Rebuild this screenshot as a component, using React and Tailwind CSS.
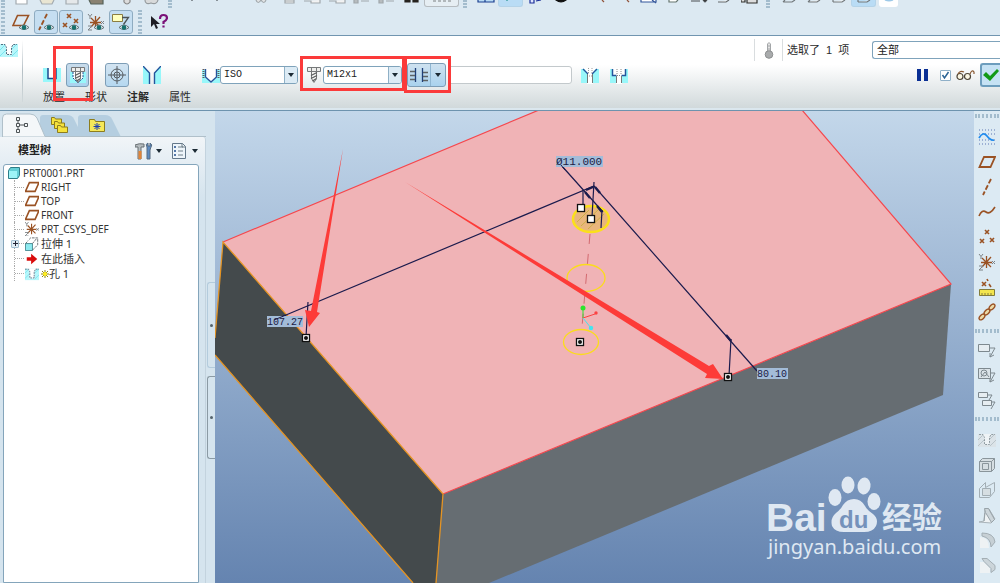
import { useState } from "react";

const BROWN = "#9a5224";

const Icon = ({ children, className = "" }) => (
  <svg
    viewBox="0 0 18 18"
    className={`h-[18px] w-[18px] shrink-0 ${className}`}
    fill="none"
    aria-hidden="true"
  >
    {children}
  </svg>
);

const Eye = () => (
  <g>
    <path d="M7 14.500q5-5 10 0q-5 4-10 0z" fill="#e6eef2" stroke="#5d6d72" />
    <circle cx="12" cy="14.500" r="2.300" fill="#14706c" />
  </g>
);

const PlaneShape = () => (
  <path d="M6 4h11l-4.500 10H1.500z" stroke={BROWN} strokeWidth="1.800" />
);

const Crosses = () => (
  <path
    d="M5 1l4 4M9 1L5 5M1 10l4 4M5 10l-4 4M12 6l4 4M16 6l-4 4"
    stroke={BROWN}
    strokeWidth="1.600"
  />
);

const CsysShape = () => (
  <g>
    <path d="M3 9.500h11M8.500 3v12M4 5l9 9M13 4l-9 10" stroke={BROWN} strokeWidth="1.300" />
    <path d="M1 1l2 2.500L5 1M3 3.500V6M1 13h4l-4 4h4M14 8l3 3M17 8l-3 3" stroke="#7d8286" />
  </g>
);

const HoleShape = ({ gray }) => (
  <g>
    <path d="M0 3h18v13H0z" fill={gray ? "#dbe3e8" : "#b6f7fb"} />
    <path
      d="M0 9l5-5M0 15l6-6M12 15l6-6M12 8l5-5"
      stroke={gray ? "#b9c4ca" : "#7be4ee"}
    />
    <path d="M4 3h10l-2 3v8H6V6z" fill={gray ? "#eef3f6" : "#fff"} />
    <path
      d="M1 3.500h4l1.500 3v7h5v-7l1.500-3h4"
      stroke={gray ? "#8f9ba1" : "#4f6d80"}
      strokeDasharray="2 1"
    />
  </g>
);

const ScrewShape = () => (
  <g stroke="#77797a">
    <path d="M6.500 5.500h5v7l-2.500 4-2.500-4z" fill="#f6f6f4" />
    <path d="M6 9.500l6-3M6 12.500l6-3M7.500 15l4-2.500" stroke="#5a5c5d" strokeWidth="1.300" />
    <path d="M2.500 1.500h13v4h-13zM6.500 1.500v4M11.500 1.500v4" fill="#eeeeec" />
  </g>
);

const Folder = ({ x = 0, y = 0 }) => (
  <path
    d={`M${x + 0.5} ${y + 8.5}v-7h3l1 1.500h6v5.500z`}
    fill="#f5e23c"
    stroke="#8d7d1d"
  />
);

/* bottom slices of the scrolled-off toolbar */
const slices = [
  { name: "new", gap: "ml-[4px]", path: "M3 0v4h11V0", fill: "#fff", stroke: "#a3abb0" },
  { name: "open", gap: "", path: "M2 0l2 4h10l2-4", fill: "#e9e5d2", stroke: "#a3abb0" },
  { name: "save", gap: "", path: "M3 0v4h12V0", fill: "#e5e8ea", stroke: "#a3abb0" },
  { name: "print", gap: "", path: "M1 0l2 4h12V0", fill: "#8a8272", stroke: "#56635a" },
  { name: "mail", gap: "ml-[5px]", path: "M6 0v2q3 4 6 0V0", fill: "#dcdcdc", stroke: "#888" },
  { name: "link", gap: "", path: "M2 0q0 5 6 3q6 2 7-3", fill: "#d8dadb", stroke: "#959b9e" },
  { name: "undo", gap: "ml-[6px]", path: "M10 0v1", fill: "none", stroke: "#4f565b", grip: true },
  { name: "redo", gap: "ml-[4px]", path: "M6 0v1", fill: "none", stroke: "#4f565b" },
  { name: "regenerate", gap: "ml-[16px]", path: "M4 0q2 5 5 0q3 5 5 0", fill: "#e2e4e5", stroke: "#a0a7ab" },
  { name: "cut", gap: "ml-[4px]", path: "M4 0v3h9V0M4 1h9", fill: "#f2f2f2", stroke: "#a0a7ab" },
  { name: "copy", gap: "-ml-[3px]", path: "M1 1h7v2h9V0", fill: "#f2f2f2", stroke: "#a0a7ab" },
  { name: "paste", gap: "", path: "M1 1h7v2h9V0", fill: "#f2f2f2", stroke: "#a0a7ab" },
  { name: "tree up", gap: "", path: "M1 0v3h4V0M8 1h8", fill: "#b7bcbf", stroke: "#a0a7ab" },
  { name: "tree down", gap: "", path: "M1 0v3h4V0M8 1h8", fill: "#b7bcbf", stroke: "#a0a7ab" },
  { name: "find", gap: "", path: "M2 0v2h5V0M10 0v2h5V0", fill: "#26231f", stroke: "#26231f" },
  { name: "select box", gap: "", path: "M0 1h3M5 1h3M10 1h3M15 1h3", fill: "none", stroke: "#7d8082", box: true },
  { name: "window", gap: "ml-[6px]", path: "M1 0v2h16V0M8 0v2", fill: "#b9dcf5", stroke: "#1b3f8f", grip: true },
  { name: "layers", gap: "", path: "M4 0h2", fill: "none", stroke: "#0d857f", active: true },
  { name: "spin", gap: "", path: "M3 0v3h4V0M9 1l5-1", fill: "#dfe6ff", stroke: "#1c2f9a" },
  { name: "render", gap: "", path: "M4 0q5 4 10 0z", fill: "#111", stroke: "#111" },
  { name: "zoom in", gap: "ml-[17px]", path: "M8 0l2 2", fill: "none", stroke: "#92533a" },
  { name: "zoom out", gap: "", path: "M8 0l2 2", fill: "none", stroke: "#92533a" },
  { name: "refit", gap: "-ml-[4px]", path: "M1 0v2h15V0M12 0l4 3", fill: "#fff", stroke: "#33569b" },
  { name: "orient", gap: "", path: "M4 0v2h7l2-2", fill: "#fff", stroke: "#66766f" },
  { name: "views", gap: "", path: "M1 1h9M13 0l2 2 2-2", fill: "#333", stroke: "#4b4f51" },
  { name: "saved", gap: "ml-px", path: "M2 2h8l3-2", fill: "#fff", stroke: "#62686b" },
  { name: "camera", gap: "", path: "M0 0v2h4V0M6 0v3h10V0", fill: "#ddd", stroke: "#30302c" },
  { name: "wireframe", gap: "ml-[6px]", path: "M3 2h9l3-2M3 2l2-2", fill: "none", stroke: "#72787b", grip: true },
  { name: "hidden line", gap: "", path: "M3 2h9l3-2M3 2l2-2", fill: "#eee", stroke: "#72787b" },
  { name: "no hidden", gap: "", path: "M3 2h9l3-2M3 2V0", fill: "#fff", stroke: "#72787b" },
  { name: "shading", gap: "", path: "M3 2h9l3-2M3 2V0", fill: "#dceefa", stroke: "#72787b", active: true },
  { name: "realism", gap: "", path: "M5 0q4 2 8 0z", fill: "#8fc2e6", stroke: "#9dc9e8", white: true },
];

const sliceFrame = (s) => {
  if (s.active) return "w-[25px] border-[#b4d3e8] bg-[#b9dcf5]";
  if (s.white) return "w-[19px] ml-[3px] h-[5px] border-white bg-white";
  if (s.box) return "w-[35px] border-[#b6bcc0] bg-[#e6eef3]";
  return "w-[25px] border-transparent";
};

const Grip = ({ className }) => (
  <span
    className={`w-1 shrink-0 border-x-2 border-dotted border-[#a3bccd] ${className}`}
  />
);

const Toolbar = () => (
  <header className="bg-[#dce9f2]">
    <div className="flex h-2 overflow-hidden">
      <Grip className="ml-px h-2" />
      {slices.map((s) => (
        <div key={s.name} className="flex shrink-0">
          {s.grip && <Grip className="ml-[4px] h-2" />}
          <button
            type="button"
            aria-label={s.name}
            className={`h-[7px] rounded-b-[3px] border border-t-0 ${s.gap} ${sliceFrame(s)}`}
          >
            <svg viewBox="0 0 18 6" className="mx-auto h-[6px] w-[18px]">
              <path d={s.path} fill={s.fill} stroke={s.stroke} strokeWidth="1.200" />
            </svg>
          </button>
        </div>
      ))}
    </div>
    <div className="flex h-[27px] items-center gap-px">
      <Grip className="mr-[3px] ml-px h-6" />
      <ToolButton label="Datum plane display">
        <path d="M5.500 2.500h11l-5 10H1z" stroke={BROWN} strokeWidth="1.600" />
        <Eye />
      </ToolButton>
      <ToolButton label="Datum axis display" active>
        <path d="M10 1L2 17" stroke={BROWN} strokeWidth="1.800" strokeDasharray="5 2" />
        <Eye />
      </ToolButton>
      <ToolButton label="Datum point display" active>
        <Crosses />
        <Eye />
      </ToolButton>
      <ToolButton label="Coordinate system display">
        <CsysShape />
        <Eye />
      </ToolButton>
      <ToolButton label="Annotation display" active>
        <path d="M0.500 1.500h10v7h-10z" fill="#ffffbe" stroke="#8b7d42" />
        <path d="M10 4.500h6.500l-5 7" stroke="#4c5356" strokeWidth="1.300" />
        <Eye />
      </ToolButton>
      <Grip className="mx-1 h-6" />
      <ToolButton label="Context help">
        <path d="M1 3v11l3-3 2 5 2-1-2-4h4z" fill="#1d1d24" />
        <path
          d="M10 6q0-4 3.500-4t3.500 3q0 2-3.500 4v2M13.500 12.500v2"
          stroke="#7a1178"
          strokeWidth="2.200"
        />
      </ToolButton>
    </div>
  </header>
);

const ToolButton = ({ label, active, children }) => (
  <button
    type="button"
    aria-label={label}
    className={`flex h-6 w-6 shrink-0 items-center justify-center rounded-[3px] border ${
      active ? "border-[#8facc1] bg-[#c5def1]" : "border-transparent"
    }`}
  >
    <Icon>{children}</Icon>
  </button>
);

const Combo = ({ label, options, className }) => (
  <div className={`relative shrink-0 ${className}`}>
    <select
      aria-label={label}
      className="block h-[18px] w-full appearance-none rounded-[3px] border border-[#7fa3bb] bg-white pl-[3px] font-['Liberation_Mono','Noto_Sans_CJK_SC',monospace] text-[10px] leading-4 text-[#222]"
    >
      {options.map((o) => (
        <option key={o}>{o}</option>
      ))}
    </select>
    <span className="pointer-events-none absolute top-px right-px bottom-px flex w-[13px] items-center justify-center rounded-r-[2px] border-l border-[#8fb0c6] bg-[#dcebf5]">
      <Caret />
    </span>
  </div>
);

const Caret = () => (
  <svg viewBox="0 0 6 4" className="h-1 w-[6px]" aria-hidden="true">
    <path d="M0 0h6L3 4z" fill="#1c2a34" />
  </svg>
);

const Highlight = ({ className }) => (
  <span
    className={`pointer-events-none absolute border-[3px] border-[#fb3a3a] ${className}`}
  />
);

const Dashboard = () => {
  const [preview, setPreview] = useState(true);

  return (
    <section className="border-t border-[#7195b0] bg-[#dbe7ee]">
      <div className="flex items-start bg-linear-to-b from-white from-40% to-[#d1d9db]">
        <div className="flex w-[22px] shrink-0 pt-[5px]">
          <Icon>
            <HoleShape />
          </Icon>
        </div>
        <div className="mt-1 h-[62px] w-px shrink-0 bg-linear-to-b from-white via-[#b5bfc5] to-[#d1d9db]" />
        <div className="flex flex-col pt-[27px]">
          <div className="flex h-6 items-center pl-5">
            <Icon>
              <path d="M0 2h18v14H0z" fill="#98f7fa" />
              <path d="M5 0h8v12H5z" fill="#fff" />
              <path d="M5 2v10.500h8V2" stroke="#1e4a8e" strokeWidth="1.500" />
            </Icon>
            <div className="relative ml-[5px]">
              <button
                type="button"
                aria-label="Standard hole"
                className="flex h-6 w-[23px] items-center justify-center rounded-[3px] border border-[#7d9db6] bg-linear-to-b from-[#c9dceb] to-[#a9d2ee]"
              >
                <Icon>
                  <path d="M1 6h16v11H1z" fill="#98f7fa" />
                  <path d="M4 6v6l5 5 5-5V6" fill="#fff" stroke="#1e4a8e" strokeDasharray="2 1" />
                  <ScrewShape />
                </Icon>
              </button>
              <Highlight className="-top-[17px] -left-[13px] h-[55px] w-[40px]" />
            </div>
            <button
              type="button"
              aria-label="Tap hole"
              className="ml-4 flex h-6 w-6 items-center justify-center rounded-[3px] border border-[#7d9db6] bg-linear-to-b from-[#d3e4f1] to-[#b5d8f0]"
            >
              <Icon>
                <circle cx="9" cy="9" r="6" stroke="#555b60" />
                <circle cx="9" cy="9" r="3" stroke="#555b60" />
                <path d="M9 0v18M0 9h18" stroke="#555b60" />
              </Icon>
            </button>
            <button type="button" aria-label="Countersink" className="ml-[14px]">
              <Icon>
                <path d="M0 0l7 7v11H0zM18 0l-7 7v11h7z" fill="#98f7fa" />
                <path d="M0 0l6.500 7v11M18 0l-6.500 7v11" stroke="#23549c" strokeWidth="1.400" />
              </Icon>
            </button>
            <Icon className="ml-[41px]">
              <path d="M0 4h18v13H0z" fill="#98f7fa" />
              <path d="M3 3h12v8l-6 6-6-6z" fill="#fff" />
              <path d="M3.500 3v8l5.500 5 5.500-5V3" stroke="#23549c" strokeWidth="1.400" />
              <path d="M1.500 3v9M16.500 3v9" stroke="#5c5f60" strokeWidth="2" strokeDasharray="1 1" />
            </Icon>
            <Combo label="Thread series" options={["ISO", "UNC", "UNF"]} className="w-[78px]" />
            <div className="relative ml-[7px] flex items-center">
              <Icon>
                <ScrewShape />
              </Icon>
              <Combo label="Screw size" options={["M12x1", "M12x1.25", "M12x1.5"]} className="w-[79px]" />
              <Highlight className="-top-[10px] -left-[5px] h-[35px] w-[105px]" />
            </div>
            <div className="relative ml-[5px]">
              <button
                type="button"
                aria-label="Depth option"
                className="flex h-6 w-[39px] items-center rounded-[3px] border border-[#7d9db6] bg-linear-to-b from-[#cfe2f0] to-[#a9d2ee]"
              >
                <span className="flex h-full w-[23px] items-center justify-center border-r border-[#8fb6d2]">
                  <Icon>
                    <path d="M5.500 2v14M12.500 2v14" stroke="#1f3f78" strokeWidth="1.300" />
                    <path
                      d="M0 5.500h5M0 9.500h5M0 13.500h5M13 6.500h5M13 10.500h5M13 14.500h5"
                      stroke="#5d6264"
                      strokeWidth="1.300"
                    />
                  </Icon>
                </span>
                <span className="flex flex-1 justify-center">
                  <Caret />
                </span>
              </button>
              <Highlight className="-top-[7px] -left-[3px] h-[37px] w-[47px]" />
            </div>
            <input
              type="text"
              aria-label="Depth value"
              className="ml-[2px] h-[18px] w-[124px] rounded-[3px] border border-[#c3c9cc] bg-white px-1 text-[10px]"
            />
            <button type="button" aria-label="Exit countersink" className="ml-[9px]">
              <Icon>
                <path d="M0 3h18v14H0z" fill="#98f7fa" />
                <path d="M3 2h12l-3 5v11H6V7z" fill="#fff" />
                <path d="M2 3l5 5M16 3l-5 5" stroke="#23549c" strokeWidth="1.400" />
                <path d="M6.500 8v9M11.500 8v9" stroke="#777" />
                <path d="M7.500 2v5M11 2v5M8 10h3" stroke="#999" strokeDasharray="1 1" />
              </Icon>
            </button>
            <button type="button" aria-label="Counterbore" className="ml-[11px]">
              <Icon>
                <path d="M0 3h18v14H0z" fill="#98f7fa" />
                <path d="M3 2h12v7h-3v9H6V9H3z" fill="#fff" />
                <path d="M2.500 3v6.500h4M15.500 3v6.500h-4" stroke="#23549c" strokeWidth="1.500" />
                <path d="M6.500 10v7M11.500 10v7" stroke="#777" />
                <path d="M7 3v6M11 3v6M7 9.500h4" stroke="#888" strokeDasharray="1 1" />
              </Icon>
            </button>
          </div>
          <nav className="flex h-[21px] items-center gap-5 pl-5 text-[11px] text-[#2b2b2b]">
            <button type="button">放置</button>
            <button type="button">形状</button>
            <button type="button" className="font-bold">
              注解
            </button>
            <button type="button">属性</button>
          </nav>
        </div>
        <div className="ml-auto flex w-[246px] shrink-0 flex-col pt-[3px]">
          <div className="flex h-[22px] items-center">
            <span className="flex h-full w-[29px] items-center justify-center border-x border-[#d9dddf]">
              <svg viewBox="0 0 10 18" className="h-[18px] w-[10px]" aria-hidden="true">
                <path d="M3.500 11V3q1.500-3 3 0v8" fill="#e3e3e3" stroke="#a3a6a8" />
                <path d="M3.500 5h3M3.500 8h3" stroke="#a3a6a8" />
                <circle cx="5" cy="13.500" r="3.800" fill="#a9abac" stroke="#8d8f90" />
              </svg>
            </span>
            <label
              htmlFor="filter"
              className="w-[89px] pl-1 text-[11px] whitespace-pre text-[#2b2b2b]"
            >
              选取了  1  项
            </label>
            <select
              id="filter"
              className="h-[18px] flex-1 appearance-none rounded-l-[3px] border border-r-0 border-[#7fa3bb] bg-white pl-1 text-[11px] leading-4 text-[#222]"
            >
              <option>全部</option>
              <option>几何</option>
            </select>
          </div>
          <div className="mt-[2px] flex h-6 items-center justify-end">
            <button type="button" aria-label="Pause" className="flex gap-[3px]">
              <span className="h-3 w-1 bg-[#0a2f94]" />
              <span className="h-3 w-1 bg-[#0a2f94]" />
            </button>
            <span className="relative ml-3 flex">
              <input
                type="checkbox"
                aria-label="Preview"
                checked={preview}
                onChange={(e) => setPreview(e.target.checked)}
                className="h-[11px] w-[11px] appearance-none rounded-[1px] border border-[#8fb0c8] bg-white"
              />
              {preview && (
                <svg viewBox="0 0 11 11" className="pointer-events-none absolute inset-0 h-[11px] w-[11px]">
                  <path d="M2.500 5l2 3 4-6" fill="none" stroke="#2a6394" strokeWidth="1.500" />
                </svg>
              )}
            </span>
            <svg viewBox="0 0 20 12" className="ml-[5px] h-3 w-5" fill="none" aria-hidden="true">
              <circle cx="4" cy="7.500" r="3" fill="#fbf7e4" stroke="#4c4436" strokeWidth="1.200" />
              <circle cx="11.500" cy="7.500" r="3" fill="#fbf7e4" stroke="#4c4436" strokeWidth="1.200" />
              <path d="M2 5q2-4 6-2M14 5q2-5 4-2v2" stroke="#8a5a34" strokeWidth="1.200" />
            </svg>
            <button
              type="button"
              aria-label="Accept"
              className="ml-1 flex h-6 w-5 items-center justify-center rounded-l-[3px] border-2 border-r-0 border-[#6d9dbd] bg-[#c6e2f4]"
            >
              <svg viewBox="0 0 16 14" className="h-[14px] w-4">
                <path d="M0 7l3-3 4 4 7-7 2 2L7 13z" fill="#129a16" />
              </svg>
            </button>
          </div>
        </div>
      </div>
      <div className="h-[3px] border-b border-[#6d93ae]" />
    </section>
  );
};

const TREE = [
  { name: "RIGHT", icon: "plane" },
  { name: "TOP", icon: "plane" },
  { name: "FRONT", icon: "plane" },
  { name: "PRT_CSYS_DEF", icon: "csys" },
  { name: "拉伸 1", icon: "extrude", cjk: true, plus: true },
  { name: "在此插入", icon: "insert", cjk: true },
  { name: "孔 1", icon: "hole", cjk: true, star: true },
];

const TreeIcon = ({ type }) => (
  <svg viewBox="1 1 16 16" className="h-[14px] w-[14px] shrink-0" fill="none" aria-hidden="true">
    {type === "plane" && <PlaneShape />}
    {type === "csys" && <CsysShape />}
    {type === "extrude" && (
      <g>
        <path d="M1.500 8.500h8v8h-8z" fill="#8eeaf0" stroke="#3d8189" />
        <path d="M1.500 8.500l3-3M9.500 8.500l5-6M9.500 16l6-6V2h-8l-3 3" stroke="#5b6467" strokeDasharray="3 1" />
      </g>
    )}
    {type === "insert" && <path d="M3 7h5V3l7 6-7 6v-4H3z" fill="#d90c0c" />}
    {type === "hole" && <HoleShape />}
  </svg>
);

const ModelTree = () => (
  <ul className="mr-[6px] ml-[3px] flex-1 rounded-t-[3px] border border-[#84a5bb] bg-white pt-[1px] font-['Noto_Sans','Noto_Sans_CJK_SC',sans-serif] text-[10px] leading-[14px] text-[#333]">
    <li className="flex h-[14px] items-center gap-[3px] pl-1">
      <svg viewBox="0 0 12 12" className="h-3 w-3 shrink-0">
        <path d="M.5 3.500l2-3h9v8l-2 3h-9z" fill="#64cfd6" stroke="#2e7d88" />
        <path d="M1 4h8v7H1z" fill="#9df4f7" />
      </svg>
      PRT0001.PRT
    </li>
    {TREE.map((n) => (
      <li
        key={n.name}
        className={`flex items-center ${n.cjk ? "h-[15px] text-[11px]" : "h-[14px]"}`}
      >
        <span className="relative ml-[10px] flex h-full w-[10px] items-center border-l border-dotted border-[#aaa]">
          <span className="w-full border-t border-dotted border-[#aaa]" />
          {n.plus && (
            <button
              type="button"
              aria-label="Expand"
              className="absolute -left-1 flex h-2 w-2 items-center justify-center rounded-[1px] border border-[#a4bfd2] bg-[#e1edf5]"
            >
              <svg viewBox="0 0 5 5" className="h-[5px] w-[5px]">
                <path d="M0 2.500h5M2.500 0v5" stroke="#223" />
              </svg>
            </button>
          )}
        </span>
        <span className="flex items-center pl-px">
          <TreeIcon type={n.icon} />
        </span>
        <span className="flex items-center pl-[2px]">
          {n.star && (
            <svg viewBox="0 0 8 8" className="h-2 w-2">
              <path d="M4 0v8M0 4h8M1 1l6 6M7 1L1 7" stroke="#8e8410" />
              <circle cx="4" cy="4" r="2" fill="#ffee1a" />
            </svg>
          )}
          {n.name}
        </span>
      </li>
    ))}
  </ul>
);

const Sidebar = () => (
  <aside className="flex w-[215px] shrink-0 bg-[#d5e4ee]">
    <div className="flex min-w-0 flex-1 flex-col">
      <div className="relative flex h-[26px] items-end">
        <svg viewBox="0 0 206 26" className="absolute inset-0 h-[26px] w-[206px]" fill="none">
          <path d="M78 25V7q0-3 3-3h24q5 0 7 4l9 18z" fill="#b5cee0" />
          <path d="M40 25V7q0-3 3-3h24q5 0 7 4l9 18z" fill="#b5cee0" />
          <path d="M2.500 26V7q0-4 4-4H30q5 0 7 4l8 18.500h161V26z" fill="#f4f7f9" stroke="#b0c0ca" />
        </svg>
        <button type="button" aria-label="Model tree" className="relative ml-[13px] flex h-6 w-[38px] items-center">
          <Icon>
            <path
              d="M3.500 1.500h3v3h-3zM3.500 7.500h3v3h-3zM3.500 13.500h3v3h-3zM11.500 7.500h3v3h-3z"
              stroke="#4d5356"
            />
            <path d="M5 5v2M5 11v2M7 9h4" stroke="#4d5356" />
          </Icon>
        </button>
        <button type="button" aria-label="Folders" className="relative flex h-6 w-[37px] items-center">
          <Icon>
            <Folder x={0} y={0} />
            <Folder x={3} y={4} />
            <Folder x={6} y={8} />
          </Icon>
        </button>
        <button type="button" aria-label="Favorites" className="relative flex h-6 items-center">
          <Icon>
            <path d="M1.500 15.500v-12h5l1 2h9v10z" fill="#f5e85a" stroke="#8d7d1d" />
            <path d="M9 7v7M5.500 10.500h7M6.500 8l5 5M11.500 8l-5 5" stroke="#1c3fb4" />
          </Icon>
        </button>
      </div>
      <div className="flex min-h-0 flex-1 flex-col rounded-tr-[3px] border-r border-[#c3d3de] bg-linear-to-b from-[#f1f5f8] to-[#d5e4ee] to-[60px]">
        <div className="flex h-[27px] shrink-0 items-center pr-[7px] pl-[18px]">
          <h2 className="flex-1 text-[11px] font-bold text-[#222]">模型树</h2>
          <button type="button" aria-label="Settings" className="flex items-center gap-[3px]">
            <Icon>
              <path d="M0 5V3q4-2 9-1v3H6v12H3V5z" fill="#b5bcbf" stroke="#666e72" />
              <path d="M3.500 9h3v8h-3z" fill="#e0853a" />
              <path d="M12 8V5q-2-3 1-4v3h2V1q3 2 1 4l-1 3v9h-3z" fill="#5d8cc4" stroke="#566b80" />
            </Icon>
            <Caret />
          </button>
          <button type="button" aria-label="Show" className="ml-[9px] flex items-center gap-[3px]">
            <Icon>
              <path d="M1.500 1.500h10l3 3v12h-13z" fill="#eef5fa" stroke="#64788a" />
              <path d="M3 5h2M3 9h2M3 13h2" stroke="#234f8f" strokeWidth="1.600" />
              <path d="M7 5h5M7 9h5M7 13h5M11 1v4h4" stroke="#6e7e88" />
            </Icon>
            <Caret />
          </button>
        </div>
        <ModelTree />
      </div>
    </div>
    <div className="flex w-[9px] shrink-0 flex-col pt-[171px]">
      <button
        type="button"
        aria-label="Collapse panel"
        className="ml-px flex h-[86px] items-center justify-center rounded-l-[3px] border border-r-0 border-[#b3cbdc]"
      >
        <span className="h-[3px] w-[3px] rounded-full bg-[#56646d]" />
      </button>
      <button
        type="button"
        aria-label="Expand browser"
        className="mt-2 ml-px flex h-[83px] items-center justify-center rounded-l-[3px] border border-r-0 border-[#8b9aa4]"
      >
        <span className="h-[3px] w-[3px] rounded-full bg-[#56646d]" />
      </button>
    </div>
  </aside>
);

const Handle = ({ x, y, dot }) => (
  <g>
    <rect x={x - 3.5} y={y - 3.5} width="7" height="7" fill="#fff" stroke="#111" strokeWidth="1.300" />
    {dot && <circle cx={x} cy={y} r="2" fill="#111" />}
  </g>
);

const Dimension = ({ x, y, width, size, children }) => (
  <g>
    <rect x={x} y={y} width={width} height="11" fill="#a3bcd8" />
    <text x={x} y={y + 9} className={`fill-[#1b1b45] font-['Liberation_Mono',monospace] ${size}`}>
      {children}
    </text>
  </g>
);

const Viewport = () => (
  <main className="relative min-w-0 flex-1 overflow-hidden bg-linear-to-b from-[#c3d7ea] to-[#6584b0]">
    <svg
      viewBox="215 111 759 472"
      preserveAspectRatio="xMinYMin slice"
      className="absolute inset-0 h-full w-full"
      fill="none"
    >
      <path d="M223 242L443 494L436 583H413L215 355V338z" fill="#444a4c" />
      <path d="M443 494L951 284L943 395L489 583H436z" fill="#666d72" />
      <path d="M539 110H802L951 284L443 494L223 242z" fill="#f0b3b6" />
      <path d="M539 110L223 242M802 110L951 284L443 494" stroke="#f5474d" strokeWidth="1.200" />
      <path
        d="M215 338L223 242L443 494L436 583M215 355L413 583"
        stroke="#e59423"
        strokeWidth="1.300"
      />

      <ellipse cx="591" cy="219" rx="18" ry="13" fill="#e9b67c" stroke="#fbe01a" strokeWidth="2.500" />
      <path d="M577 222l12-12M581 226l18-17M588 229l16-15" stroke="#cdb047" />
      <ellipse cx="586" cy="278" rx="19" ry="13.500" stroke="#fbdc1c" strokeWidth="1.300" />
      <ellipse cx="581" cy="342" rx="17.500" ry="12.500" stroke="#fbdc1c" strokeWidth="1.300" />
      <path d="M590 234L582 327" stroke="#d36a70" strokeDasharray="10 10" />

      <g stroke="#1b1b4d" strokeWidth="1.200">
        <path d="M274 320L594 186L757 371M561 165L603 212" />
        <path d="M594 182L592 217M583 190V208M602 210L601 228M308 302L306 337M731 339L729 376" />
        <path d="M586 190l7-3M595 187l5 6M585 192l5 6M597 206l5 6M726 335l5 6" strokeWidth="2.400" />
      </g>

      <Dimension x={556} y={156} width={47} size="text-[11px]">
        Ø11.000
      </Dimension>
      <Dimension x={267} y={316} width={36} size="text-[10px]">
        107.27
      </Dimension>
      <Dimension x={757} y={368} width={31} size="text-[10px]">
        80.10
      </Dimension>
      <path d="M561 165l4 5M274 320l12-5" stroke="#1b1b4d" />

      <path d="M583 318L583 308" stroke="#2fe02f" />
      <path d="M583 318L595 314" stroke="#fb4242" />
      <path d="M583 318L591 328" stroke="#45e4ee" />
      <circle cx="583" cy="308" r="2.500" fill="#2be52b" />
      <circle cx="596" cy="313" r="1.700" fill="#fb4242" />
      <circle cx="591" cy="328" r="2.200" fill="#45e4ee" />

      <path d="M343 149L317 312L320 313L309 327L305 310L311 311z" fill="#fd3b38" />
      <path d="M405 182L709 366L713 364L723 379L705 378L707 374z" fill="#fd3b38" />

      <Handle x={581} y={208} />
      <Handle x={591} y={219} />
      <Handle x={580} y={342} dot />
      <Handle x={306} y={338} dot />
      <Handle x={728} y={377} dot />

      <g fill="#dfe8f2">
        <text x="766" y="531" className="font-['Liberation_Sans',sans-serif] text-[39px] font-bold">
          Bai
        </text>
        <ellipse cx="835" cy="497.500" rx="6.500" ry="8.500" />
        <ellipse cx="848" cy="485" rx="6.500" ry="8.500" />
        <ellipse cx="864" cy="486" rx="6.500" ry="8.500" transform="rotate(8 864 486)" />
        <ellipse cx="874" cy="501.500" rx="6.500" ry="8.500" />
        <path d="M854 499q7 0 11 7q2 4 8 8q6 5 3 12q-3 6-12 6h-20q-9 0-12-6q-2-8 4-13q5-4 7-8q4-6 11-6z" />
        <text x="882" y="528" className="font-['Noto_Sans_CJK_SC',sans-serif] text-[30px] font-bold">
          经验
        </text>
        <text x="768" y="554" className="font-['Noto_Sans',sans-serif] text-[20px]">
          jingyan.baidu.com
        </text>
      </g>
      <text
        x="839"
        y="528"
        className="fill-[#7592bb] font-['Liberation_Sans',sans-serif] text-[24px] font-bold"
      >
        du
      </text>
    </svg>
  </main>
);

const Dots = () => (
  <span className="mx-px h-1 shrink-0 border-y-2 border-dotted border-[#a3bccd]" />
);

const RailButton = ({ label, children }) => (
  <button
    type="button"
    aria-label={label}
    className="flex h-[25px] shrink-0 items-center justify-center"
  >
    <Icon>{children}</Icon>
  </button>
);

const Rail = () => (
  <aside className="flex w-[26px] shrink-0 flex-col overflow-hidden bg-[#dceaf3] pt-[3px]">
    <Dots />
    <div className="flex flex-col pt-[6px] pb-[5px]">
      <RailButton label="Sketch">
        <path d="M1 2h16M1 6h16M1 12h16M1 16h16" stroke="#5c76b4" strokeDasharray="1 2" />
        <path d="M1 10q4-7 8-2t7 4" stroke="#1f8bee" strokeWidth="1.800" />
      </RailButton>
      <RailButton label="Datum plane">
        <PlaneShape />
      </RailButton>
      <RailButton label="Datum axis">
        <path d="M13 1L5 17" stroke={BROWN} strokeWidth="1.800" strokeDasharray="5 2" />
      </RailButton>
      <RailButton label="Datum curve">
        <path d="M1 13q3-7 7-4t9-5" stroke={BROWN} strokeWidth="1.600" />
      </RailButton>
      <RailButton label="Datum point">
        <path
          d="M7 2l4 4M11 2l-4 4M2 11l4 4M6 11l-4 4M12 10l4 4M16 10l-4 4"
          stroke={BROWN}
          strokeWidth="1.600"
        />
      </RailButton>
      <RailButton label="Coordinate system">
        <CsysShape />
      </RailButton>
      <RailButton label="Analysis">
        <path d="M4 4l4 4M8 4l-4 4M9 1l1 2M11 6l2 3" stroke={BROWN} strokeWidth="1.600" />
        <path d="M1.500 11.500h15v6h-15z" fill="#f3e54e" stroke="#837c3a" />
        <path d="M4 15v2M7 15v2M10 15v2M13 15v2" stroke="#837c3a" />
      </RailButton>
      <RailButton label="Reference">
        <g stroke={BROWN} strokeWidth="1.400" fill="#ead9a6">
          <ellipse cx="4" cy="14" rx="3.500" ry="2" transform="rotate(-45 4 14)" />
          <ellipse cx="9" cy="9" rx="3.500" ry="2" transform="rotate(-45 9 9)" />
          <ellipse cx="14" cy="4" rx="3.500" ry="2" transform="rotate(-45 14 4)" />
        </g>
      </RailButton>
    </div>
    <Dots />
    <div className="flex flex-col pt-1 pb-[5px]">
      <RailButton label="Annotation">
        <path d="M.5 3.500h11v7H.5z" fill="#e6edf1" stroke="#7e898f" />
        <path d="M12 7h5l-5 9M12 12v4l4-2" stroke="#7e898f" />
      </RailButton>
      <RailButton label="Annotation element">
        <path d="M.5 2.500h12v10H.5z" fill="#dbe3e8" stroke="#7e898f" />
        <circle cx="6" cy="7" r="3" stroke="#7e898f" />
        <path d="M3 11l4-5 4 5M13 7h4l-5 9M12 12v4l4-2" stroke="#7e898f" />
      </RailButton>
      <RailButton label="Propagation">
        <path d="M.5 1.500h9v5h-9zM4.500 9.500h9v5h-9z" fill="#e6edf1" stroke="#7e898f" />
        <path d="M10 4h4l-3 5M14 11h3l-4 7" stroke="#7e898f" />
      </RailButton>
    </div>
    <Dots />
    <div className="flex flex-col pt-[6px]">
      <RailButton label="Hole">
        <HoleShape gray />
      </RailButton>
      <RailButton label="Shell">
        <path d="M1.500 5.500l3-3h12v10l-3 3h-12z" fill="#d6dee2" stroke="#8a959b" />
        <path d="M1.500 5.500h12v10M13.500 5.500l3-3M4.500 7.500h6v6h-6z" stroke="#8a959b" />
      </RailButton>
      <RailButton label="Rib">
        <path d="M1.500 16.500v-9l6-6v5M7.500 6.500l9-5v9l-5 6h-10" stroke="#a3aeb4" />
        <path d="M4.500 7.500h8v7h-8z" fill="#d6dee2" stroke="#a3aeb4" />
      </RailButton>
      <RailButton label="Draft">
        <path d="M1 16l5-1 1-12h4l6 10-4 4z" fill="#eef2f4" stroke="#a9b3b9" />
        <path d="M6.500 2.500h4l6 11-3 3-6-10zM7 7l-1 8" fill="#ccd5da" stroke="#97a2a8" />
      </RailButton>
      <RailButton label="Round">
        <path d="M2 6q9 0 9 11H2z" fill="#eef2f4" />
        <path d="M4 2q12 0 13 9l-4 5q0-9-9-11z" fill="#c7d0d5" stroke="#a3aeb4" />
      </RailButton>
      <RailButton label="Chamfer">
        <path d="M2 6h4l6 6v5H2z" fill="#eef2f4" />
        <path d="M4 2.500h5l8 7v4l-4 3v-4l-7-7z" fill="#ccd5da" stroke="#a3aeb4" />
      </RailButton>
    </div>
  </aside>
);

export default function App() {
  return (
    <div className="flex h-screen flex-col overflow-hidden bg-[#dce9f2] font-['Liberation_Sans','Noto_Sans_CJK_SC',sans-serif]">
      <Toolbar />
      <Dashboard />
      <div className="flex min-h-0 flex-1">
        <Sidebar />
        <Viewport />
        <Rail />
      </div>
    </div>
  );
}
